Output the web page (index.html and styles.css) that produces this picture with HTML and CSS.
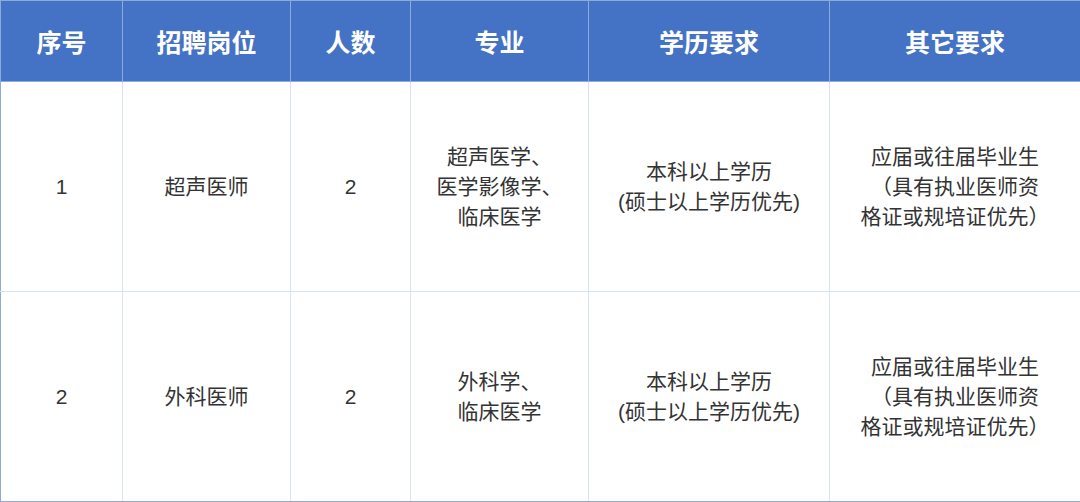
FILE: index.html
```html
<!DOCTYPE html>
<html lang="zh">
<head>
<meta charset="utf-8">
<link rel="stylesheet" href="styles.css">
</head>
<body>
<table class="jobs">
  <colgroup>
    <col class="c1"><col class="c2"><col class="c3"><col class="c4"><col class="c5"><col class="c6">
  </colgroup>
  <thead>
    <tr class="head">
      <th>序号</th><th>招聘岗位</th><th>人数</th><th>专业</th><th>学历要求</th><th>其它要求</th>
    </tr>
  </thead>
  <tbody>
    <tr class="row r1">
      <td>1</td>
      <td>超声医师</td>
      <td>2</td>
      <td>超声医学、<br>医学影像学、<br>临床医学</td>
      <td>本科以上学历<br>(硕士以上学历优先)</td>
      <td>应届或往届毕业生<br>（具有执业医师资<br>格证或规培证优先）</td>
    </tr>
    <tr class="row r2">
      <td>2</td>
      <td>外科医师</td>
      <td>2</td>
      <td>外科学、<br>临床医学</td>
      <td>本科以上学历<br>(硕士以上学历优先)</td>
      <td>应届或往届毕业生<br>（具有执业医师资<br>格证或规培证优先）</td>
    </tr>
  </tbody>
</table>
</body>
</html>
```

FILE: styles.css
```css
html, body {
  margin: 0;
  padding: 0;
  background: #ffffff;
}

.jobs {
  width: 1080px;
  table-layout: fixed;
  border-collapse: collapse;
  font-family: "Liberation Sans", "Noto Sans CJK SC", sans-serif;
}

.c1 { width: 122px; }
.c2 { width: 168px; }
.c3 { width: 120px; }
.c4 { width: 178px; }
.c5 { width: 241px; }
.c6 { width: 251px; }

.head th {
  height: 80px;
  padding: 0;
  background: #4472c4;
  color: #ffffff;
  font-size: 25px;
  font-weight: 700;
  text-align: center;
  vertical-align: middle;
  border: 1px solid #8eaadb;
}

.row td {
  padding: 0;
  color: #333333;
  font-size: 21px;
  line-height: 30px;
  text-align: center;
  vertical-align: middle;
  border: 1px solid #d9e2f3;
}

.r1 td { height: 209px; }
.r2 td { height: 209px; }

.row td:first-child { border-left-color: #8eaadb; }
.row td:last-child { border-right-color: #8eaadb; }
.r2 td { border-bottom-color: #8eaadb; }
```
